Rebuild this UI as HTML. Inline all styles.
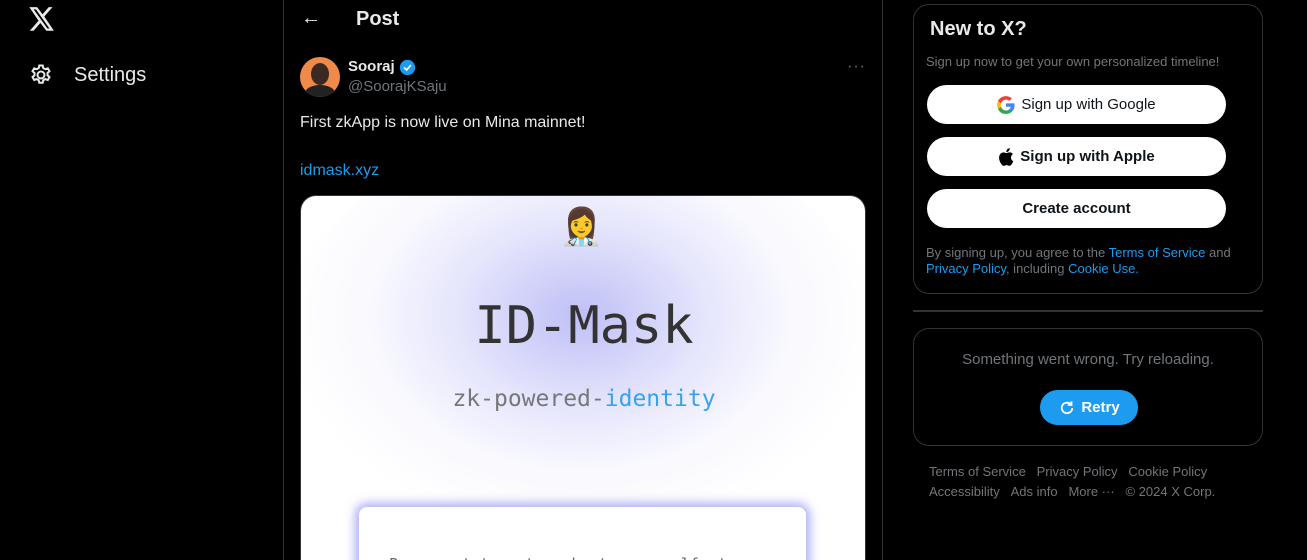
<!DOCTYPE html>
<html><head><meta charset="utf-8"><style>
*{box-sizing:border-box;margin:0;padding:0}
html,body{width:1307px;height:560px;overflow:hidden}
body{background:#000;position:relative;font-family:"Liberation Sans","Noto Sans CJK SC",sans-serif;color:#e7e9ea}
.abs{position:absolute}
.main{position:absolute;left:283px;top:0;width:600px;height:560px;border-left:1px solid #2f3336;border-right:1px solid #2f3336}
.card{position:absolute;left:300px;top:195px;width:566px;height:365px;border-radius:16px 16px 0 0;background:#fff;overflow:hidden;border:1px solid #333;border-bottom:none}
.glow{position:absolute;left:-20px;top:-60px;width:600px;height:400px;border-radius:50%;background:radial-gradient(ellipse at 50% 45%,rgba(180,180,245,.85) 0%,rgba(205,205,250,.5) 30%,rgba(235,235,252,.3) 50%,rgba(255,255,255,0) 70%)}
.mono{font-family:"DejaVu Sans Mono","Liberation Mono",monospace}
.box{position:absolute;left:913px;width:350px;border:1px solid #2f3336;border-radius:16px}
.btn{position:absolute;left:13px;width:299px;height:39px;background:#fff;border-radius:20px;color:#0f1419;font-size:15px;display:flex;align-items:center;justify-content:center;gap:6px}
.link{color:#1d9bf0}
.foot{font-size:13px;color:#71767b}
</style></head><body>
<svg class="abs" style="left:29px;top:7px" width="26" height="24" viewBox="0 0 24 22"><path fill="#e7e9ea" d="M18.2 0h3.5l-7.6 8.7L23 21.9h-7l-5.5-7.2-6.3 7.2H.7l8.1-9.3L.3 0h7.2l5 6.6zm-1.2 19.8h1.9L6.4 2.1H4.3z"/></svg>
<svg class="abs" style="left:29px;top:63px" width="24" height="24" viewBox="0 0 24 24" fill="none" stroke="#e7e9ea" stroke-width="2"><circle cx="12" cy="12" r="3.5"/><path d="M10.3 2.5h3.4l.6 2.6 2 1.1 2.5-.9 1.7 2.9-2 1.8v2.3l2 1.8-1.7 2.9-2.5-.9-2 1.1-.6 2.6h-3.4l-.6-2.6-2-1.1-2.5.9-1.7-2.9 2-1.8V10l-2-1.8 1.7-2.9 2.5.9 2-1.1z"/></svg>
<div class="abs" style="left:74px;top:64px;font-size:20px">Settings</div>
<div class="main"></div>
<div class="abs" style="left:301px;top:7px;font-size:20px">←</div>
<div class="abs" style="left:356px;top:8px;font-size:20px;font-weight:bold">Post</div>
<div class="abs" style="left:300px;top:57px;width:40px;height:40px;border-radius:50%;background:#f08a4b;overflow:hidden"><div style="position:absolute;left:11px;top:6px;width:18px;height:22px;border-radius:50%;background:#3a2a22"></div><div style="position:absolute;left:5px;top:28px;width:30px;height:16px;border-radius:50% 50% 0 0;background:#222"></div></div>
<div class="abs" style="left:348px;top:58px;font-size:15px;font-weight:bold">Sooraj</div>
<svg class="abs" style="left:399px;top:59px" width="17" height="17" viewBox="0 0 20 20"><circle cx="10" cy="10" r="9" fill="#1d9bf0"/><path d="M6 10l3 3 5-6" stroke="#fff" stroke-width="2" fill="none"/></svg>
<div class="abs" style="left:348px;top:78px;font-size:15px;color:#71767b">@SoorajKSaju</div>
<div class="abs" style="left:847px;top:58px;font-size:16px;color:#71767b;letter-spacing:1px">···</div>
<div class="abs" style="left:300px;top:114px;font-size:16px">First zkApp is now live on Mina mainnet!</div>
<div class="abs link" style="left:300px;top:162px;font-size:16px">idmask.xyz</div>
<div class="card">
<div class="glow"></div>
<div class="abs" style="left:258px;top:10px;font-size:36px;font-family:'Noto Color Emoji',sans-serif">👩‍⚕️</div>
<div class="abs mono" style="left:0;width:566px;text-align:center;top:100px;font-size:52px;color:#333">ID-Mask</div>
<div class="abs mono" style="left:0;width:566px;text-align:center;top:190px;font-size:23px;color:#777">zk-powered-<span style="color:#3aa0f0">identity</span></div>
<div class="abs" style="left:58px;top:311px;width:447px;height:100px;background:#fff;border-radius:8px;box-shadow:0 0 10px 4px rgba(140,140,245,.7)"><div class="mono" style="margin:48px 30px;font-size:15px;color:#666;word-spacing:10px">Prove statements about yourself to</div></div>
</div>
<div class="box" style="top:4px;height:290px">
<div class="abs" style="left:16px;top:13px;font-size:20px;font-weight:bold">New to X?</div>
<div class="abs" style="left:12px;top:49px;font-size:13px;color:#71767b">Sign up now to get your own personalized timeline!</div>
<div class="btn" style="top:80px"><svg width="18" height="18" viewBox="0 0 18 18"><path d="M17.6 9.2c0-.6-.1-1.2-.2-1.8H9v3.4h4.8a4 4 0 0 1-1.8 2.7v2.2h2.9c1.7-1.600 2.7-3.9 2.7-6.5z" fill="#4285F4"/><path d="M9 18c2.4 0 4.5-.8 5.9-2.2l-2.9-2.2c-.8.5-1.8.9-3 .9-2.3 0-4.3-1.6-5-3.7H1v2.3A9 9 0 0 0 9 18z" fill="#34A853"/><path d="M4 10.8a5.4 5.4 0 0 1 0-3.5V5H1a9 9 0 0 0 0 8z" fill="#FBBC05"/><path d="M9 3.6c1.3 0 2.5.5 3.4 1.3L15 2.4A9 9 0 0 0 1 5l3 2.3c.7-2.1 2.7-3.7 5-3.7z" fill="#EA4335"/></svg>Sign up with Google</div>
<div class="btn" style="top:132px;font-weight:bold"><svg width="16" height="18" viewBox="0 0 16 19"><path fill="#000" d="M13.3 10c0-2.4 2-3.5 2-3.6-1.1-1.6-2.8-1.8-3.4-1.8-1.4-.2-2.8.8-3.5.8s-1.8-.8-3-.8C3.8 4.7 2.3 5.6 1.5 7c-1.7 2.9-.4 7.2 1.2 9.5.8 1.1 1.7 2.4 2.9 2.4 1.2-.1 1.6-.8 3-.8s1.8.8 3 .7c1.3 0 2-1.1 2.8-2.3.9-1.3 1.2-2.5 1.3-2.6-.1 0-2.4-.9-2.4-3.700zM11 3c.6-.8 1.1-1.8 1-2.9-.9 0-2 .6-2.7 1.4-.6.7-1.1 1.7-1 2.8 1 .1 2-.5 2.7-1.3z"/></svg>Sign up with Apple</div>
<div class="btn" style="top:184px;font-weight:bold">Create account</div>
<div class="abs" style="left:12px;top:240px;font-size:13px;line-height:16px;color:#71767b;width:330px">By signing up, you agree to the <span class="link">Terms of Service</span> and <span class="link">Privacy Policy</span>, including <span class="link">Cookie Use.</span></div>
</div>
<div class="abs" style="left:913px;top:310px;width:350px;height:2px;background:#2f3336"></div>
<div class="box" style="top:328px;height:118px">
<div class="abs" style="left:0;width:348px;text-align:center;top:22px;font-size:15px;color:#71767b">Something went wrong. Try reloading.</div>
<div class="abs" style="left:126px;top:61px;width:98px;height:35px;border-radius:18px;background:#1d9bf0;color:#fff;font-weight:bold;font-size:15px;display:flex;align-items:center;justify-content:center;gap:5px"><svg width="18" height="18" viewBox="0 0 24 24" fill="none" stroke="#fff" stroke-width="2.4"><path d="M19 12a7 7 0 1 1-2-5"/><path d="M18 3v5h-5"/></svg>Retry</div>
</div>
<div class="abs foot" style="left:929px;top:464px">Terms of Service&nbsp;&nbsp;&nbsp;Privacy Policy&nbsp;&nbsp;&nbsp;Cookie Policy</div>
<div class="abs foot" style="left:929px;top:484px">Accessibility&nbsp;&nbsp;&nbsp;Ads info&nbsp;&nbsp;&nbsp;More ···&nbsp;&nbsp;&nbsp;© 2024 X Corp.</div>
</body></html>
